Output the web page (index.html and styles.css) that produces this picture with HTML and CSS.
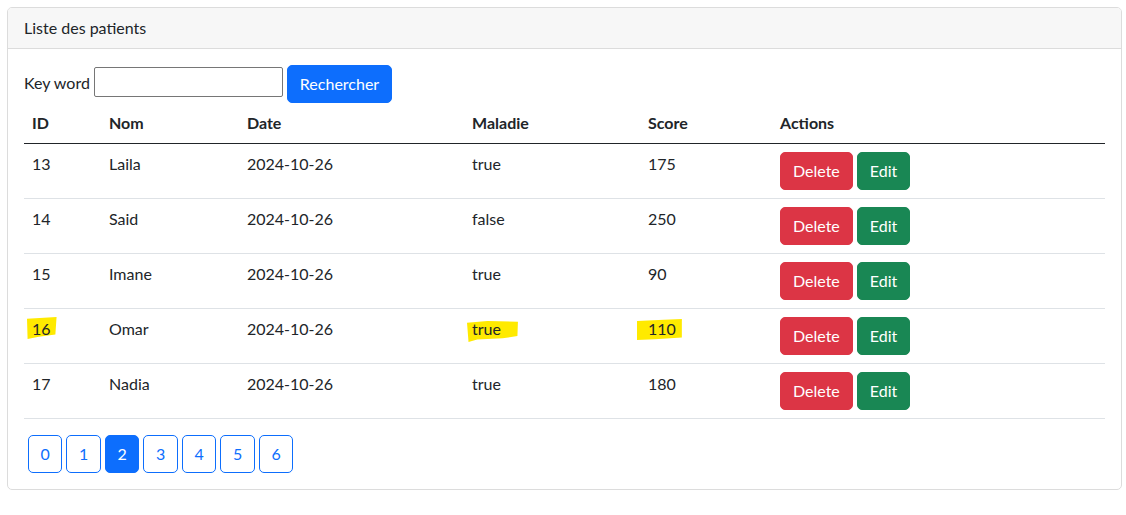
FILE: index.html
```html
<!DOCTYPE html>
<html lang="fr">
<head>
<meta charset="utf-8">
<title>Liste des patients</title>
<link rel="stylesheet" href="styles.css">
</head>
<body>
<div class="page">
  <div class="card">
    <div class="card-header">Liste des patients</div>
    <div class="card-body">
      <form class="search">
        <label class="search-label">Key word</label>
        <input class="search-input" type="text" name="keyword">
        <button class="btn btn-primary" type="button">Rechercher</button>
      </form>
      <table class="table">
        <colgroup>
          <col class="c-id"><col class="c-nom"><col class="c-date"><col class="c-mal"><col class="c-score"><col>
        </colgroup>
        <thead>
          <tr><th>ID</th><th>Nom</th><th>Date</th><th>Maladie</th><th>Score</th><th>Actions</th></tr>
        </thead>
        <tbody>
          <tr><td>13</td><td>Laila</td><td>2024-10-26</td><td>true</td><td>175</td><td><div class="actions"><button class="btn btn-danger" type="button">Delete</button><button class="btn btn-success" type="button">Edit</button></div></td></tr>
          <tr><td>14</td><td>Said</td><td>2024-10-26</td><td>false</td><td>250</td><td><div class="actions"><button class="btn btn-danger" type="button">Delete</button><button class="btn btn-success" type="button">Edit</button></div></td></tr>
          <tr><td>15</td><td>Imane</td><td>2024-10-26</td><td>true</td><td>90</td><td><div class="actions"><button class="btn btn-danger" type="button">Delete</button><button class="btn btn-success" type="button">Edit</button></div></td></tr>
          <tr><td><span class="hl hl-id">16</span></td><td>Omar</td><td>2024-10-26</td><td><span class="hl hl-mal">true</span></td><td><span class="hl hl-score">110</span></td><td><div class="actions"><button class="btn btn-danger" type="button">Delete</button><button class="btn btn-success" type="button">Edit</button></div></td></tr>
          <tr><td>17</td><td>Nadia</td><td>2024-10-26</td><td>true</td><td>180</td><td><div class="actions"><button class="btn btn-danger" type="button">Delete</button><button class="btn btn-success" type="button">Edit</button></div></td></tr>
        </tbody>
      </table>
      <ul class="pages">
        <li><a class="page-btn" href="#">0</a></li>
        <li><a class="page-btn" href="#">1</a></li>
        <li><a class="page-btn active" href="#">2</a></li>
        <li><a class="page-btn" href="#">3</a></li>
        <li><a class="page-btn" href="#">4</a></li>
        <li><a class="page-btn" href="#">5</a></li>
        <li><a class="page-btn" href="#">6</a></li>
      </ul>
    </div>
  </div>
</div>
</body>
</html>
```
FILE: styles.css
```css
* { box-sizing: border-box; }

html, body {
  margin: 0;
  background: #fff;
}

body {
  font-family: Lato, "Noto Sans", "Liberation Sans", sans-serif;
  font-size: 16px;
  line-height: 1.5;
  color: #212529;
}

.page {
  padding: 7px 4px 0 7px;
}

.card {
  border: 1px solid #dcdcdc;
  border-radius: 5px;
  overflow: hidden;
}

.card-header {
  padding: 8px 16px;
  background: #f7f7f7;
  border-bottom: 1px solid #dcdcdc;
}

.card-body {
  padding: 16px;
}

.search {
  display: flex;
  align-items: center;
  gap: 4px;
  margin: 0;
}

.search-label {
  margin-top: -2px;
}

.search-input {
  width: 189px;
  height: 30px;
  margin-top: -5px;
  border: 1px solid #767676;
  border-radius: 2px;
  padding: 1px 2px;
  font: inherit;
}

.btn {
  display: inline-block;
  padding: 6px 12px;
  font-family: inherit;
  font-size: 16px;
  line-height: 24px;
  border: 1px solid transparent;
  border-radius: 5px;
  color: #fff;
  cursor: pointer;
}

.btn-primary { background: #0d6efd; border-color: #0d6efd; }
.btn-danger { background: #dc3545; border-color: #dc3545; }
.btn-success { background: #198754; border-color: #198754; }

.table {
  width: 100%;
  border-collapse: collapse;
  table-layout: fixed;
  margin-bottom: 16px;
}

.c-id { width: 77px; }
.c-nom { width: 138px; }
.c-date { width: 225px; }
.c-mal { width: 176px; }
.c-score { width: 132px; }

.table th {
  text-align: left;
  font-weight: 700;
  padding: 8px;
  border-bottom: 1px solid #212529;
}

.table td {
  padding: 8px;
  vertical-align: top;
  border-bottom: 1px solid #dee2e6;
}

.actions {
  display: flex;
  gap: 4px;
}

.hl {
  position: relative;
  z-index: 0;
}

.hl::before {
  content: "";
  position: absolute;
  z-index: -1;
  background: #ffea00;
}

.hl-id::before {
  left: -5px;
  right: -6px;
  top: -2px;
  bottom: -1px;
  clip-path: polygon(0 8%, 100% 0, 96% 80%, 40% 90%, 2% 100%);
}

.hl-mal::before {
  left: -5px;
  right: -17px;
  top: 2px;
  bottom: -4px;
  clip-path: polygon(0 8%, 40% 0, 100% 4%, 99% 72%, 70% 82%, 20% 88%, 3% 100%);
}

.hl-score::before {
  left: -11px;
  right: -6px;
  top: 0;
  bottom: -2px;
  clip-path: polygon(0 10%, 60% 4%, 100% 0, 100% 88%, 40% 96%, 0 100%);
}

.pages {
  list-style: none;
  display: flex;
  margin: 0;
  padding: 0;
}

.pages li {
  margin-left: 4px;
}

.page-btn {
  display: block;
  padding: 6px 11.6px;
  line-height: 24px;
  border: 1px solid #0d6efd;
  border-radius: 5px;
  color: #0d6efd;
  text-decoration: none;
}

.page-btn.active {
  background: #0d6efd;
  color: #fff;
}
```
